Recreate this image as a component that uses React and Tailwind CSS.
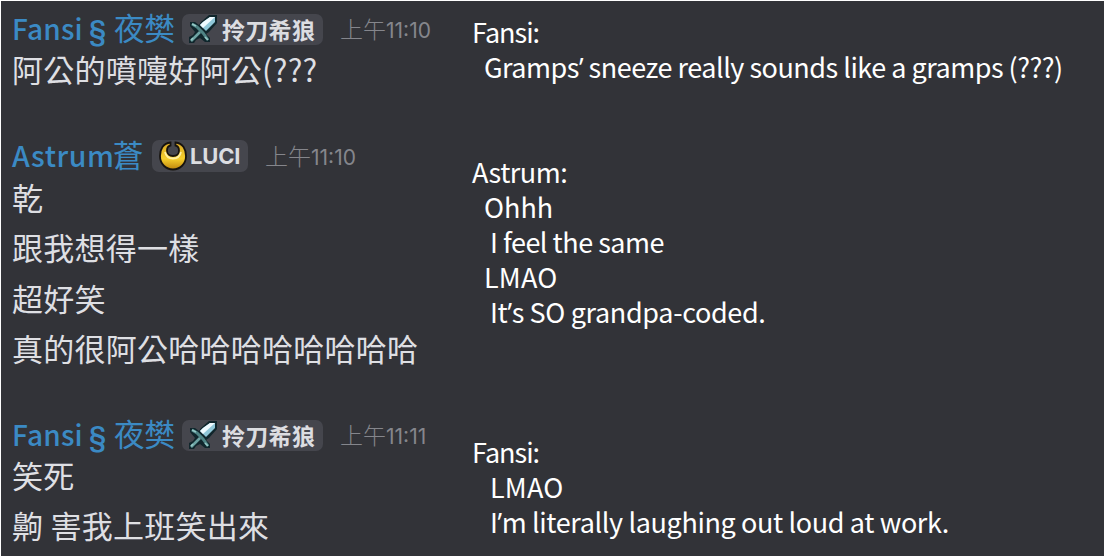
import React from 'react';

const SwordIcon = () => (
  <svg width="28" height="28" viewBox="0 0 28 28" className="shrink-0">
    <path d="M20 0H28V8L20 17L17 19L21 23V27H16L11 23L7 25L5 28H0V22L4 20L6 17L1 11V7H6L10 10L12 7Z" fill="#10262c" />
    <path d="M21 2H26V7L17 16L11 10L14 7Z" fill="#8fc7d8" />
    <path d="M21 2H26L14 13L11 10L14 7Z" fill="#eefaff" />
    <path d="M3 9L8 12L14 18L19 25" stroke="#4f8485" strokeWidth="3" fill="none" />
    <path d="M2 26L11 17" stroke="#6da3a3" strokeWidth="2.6" />
    <path d="M3 9L7 11M16 22L19 25M2 25L4 23" stroke="#96c9c6" strokeWidth="1.6" />
  </svg>
);

const MoonIcon = () => (
  <svg width="28" height="30" viewBox="0 0 28 30" className="shrink-0">
    <defs>
      <linearGradient id="gold" x1="0" y1="0" x2="0" y2="1">
        <stop offset="0" stopColor="#d9a827" />
        <stop offset="0.6" stopColor="#f6cf2c" />
        <stop offset="1" stopColor="#bd830c" />
      </linearGradient>
    </defs>
    <path d="M11.5 1.500C4 2 1 8.500 1 15C1 23 7 28.500 14 28.500C21 28.500 27 23 27 15C27 8.500 24 2 16.500 1.500V4.500C19 5 20 7 20 9.500C20 13 17.500 15 14 15C10.500 15 8 13 8 9.500C8 7 9 5 11.500 4.500Z" fill="url(#gold)" stroke="#17130f" strokeWidth="1.8" />
    <path d="M6 11C7 15.500 10 17.500 14 17.500C18 17.500 21 15.500 22 11" fill="none" stroke="#fff0a0" strokeWidth="1.8" />
  </svg>
);

const BlockHead = ({ name, tag, time, className }) => (
  <div className={`flex h-[32px] items-center ${className || ''}`}>
    {name}
    {tag}
    <span className="ml-[17px] flex items-baseline text-[#85868c]">
      <span className="text-[23px] font-light">上午</span>
      <span className="font-['Inter'] text-[21px]">{time}</span>
    </span>
  </div>
);

const fansi = (
  <span className="flex w-[170px] shrink-0 items-baseline text-[#3b8ac4]">
    <span className="w-[77px] text-[28px] font-medium tracking-[0.2px]">Fansi</span>
    <span className="w-[25px] font-['Roboto'] text-[28px] font-medium">§</span>
    <span className="text-[30.5px] leading-[30px]">夜樊</span>
  </span>
);

const wolfTag = (
  <span className="flex h-[31px] w-[141px] shrink-0 items-center rounded-[7px] bg-[#45464d] pl-[7px] text-[23px] font-bold text-[#dcdde1]">
    <SwordIcon />
    <span className="ml-[5px] leading-[30px] tracking-[0.3px]">拎刀希狼</span>
  </span>
);

const Line = ({ children, className }) => (
  <p className={`h-[50px] text-[31px] leading-[50px] tracking-[0.25px] text-[#dedfe3] ${className || ''}`}>{children}</p>
);

// the CJK face sets this quote full width
const Quote = () => <span className="font-['Open_Sans']">’</span>;

const Translation = ({ children, className }) => (
  <p className={`h-[35px] leading-[35px] ${className || ''}`}>{children}</p>
);

const App = () => (
  <div className="flex h-[556px] w-[1104px] overflow-hidden whitespace-pre border-t border-l border-white bg-[#323338] font-['Noto_Sans_CJK_TC',sans-serif]">
    <div className="w-[471px] shrink-0 pl-[11px] pt-[12px]">
      <BlockHead name={fansi} tag={wolfTag} time="11:10" />
      <Line className="-mt-px">阿公的噴嚏好阿公(???</Line>
      <BlockHead
        className="mt-[46px]"
        name={
          <span className="flex w-[140px] shrink-0 items-baseline pb-[2px] text-[#3b8ac4]">
            <span className="w-[101px] text-[28.5px] font-medium tracking-[0.6px]">Astrum</span>
            <span className="text-[30.5px] leading-[30px]">蒼</span>
          </span>
        }
        tag={
          <span className="flex h-[32px] w-[96px] shrink-0 items-center rounded-[7px] bg-[#45464d] pl-[7px] text-[22px] font-bold text-[#dcdde1]">
            <MoonIcon />
            <span className="ml-[3px] font-['Inter'] tracking-[-0.2px]">LUCI</span>
          </span>
        }
        time="11:10"
      />
      <Line>乾</Line>
      <Line>跟我想得一樣</Line>
      <Line className="pt-px">超好笑</Line>
      <Line className="pt-px">真的很阿公哈哈哈哈哈哈哈哈</Line>
      <BlockHead className="mt-[47px]" name={fansi} tag={wolfTag} time="11:11" />
      <Line className="-mt-px">笑死</Line>
      <Line>齁 害我上班笑出來</Line>
    </div>
    <div className="pt-[13px] text-[27px] tracking-[-0.5px] text-white">
      <Translation className="tracking-[-1px]">Fansi:</Translation>
      <Translation className="pl-[12px]">Gramps<Quote /> sneeze really sounds like a gramps (???)</Translation>
      <Translation className="mt-[70px]">Astrum:</Translation>
      <Translation className="pl-[12px] tracking-normal">Ohhh</Translation>
      <Translation className="pl-[18px]">I feel the same</Translation>
      <Translation className="pl-[12px] tracking-[0.2px]">LMAO</Translation>
      <Translation className="pl-[18px] tracking-[-0.35px]">It<Quote />s SO grandpa-coded.</Translation>
      <Translation className="mt-[105px] tracking-[-1px]">Fansi:</Translation>
      <Translation className="pl-[18px] tracking-[0.2px]">LMAO</Translation>
      <Translation className="pl-[18px] tracking-[-0.38px]">I<Quote />m literally laughing out loud at work.</Translation>
    </div>
  </div>
);

export default App;
